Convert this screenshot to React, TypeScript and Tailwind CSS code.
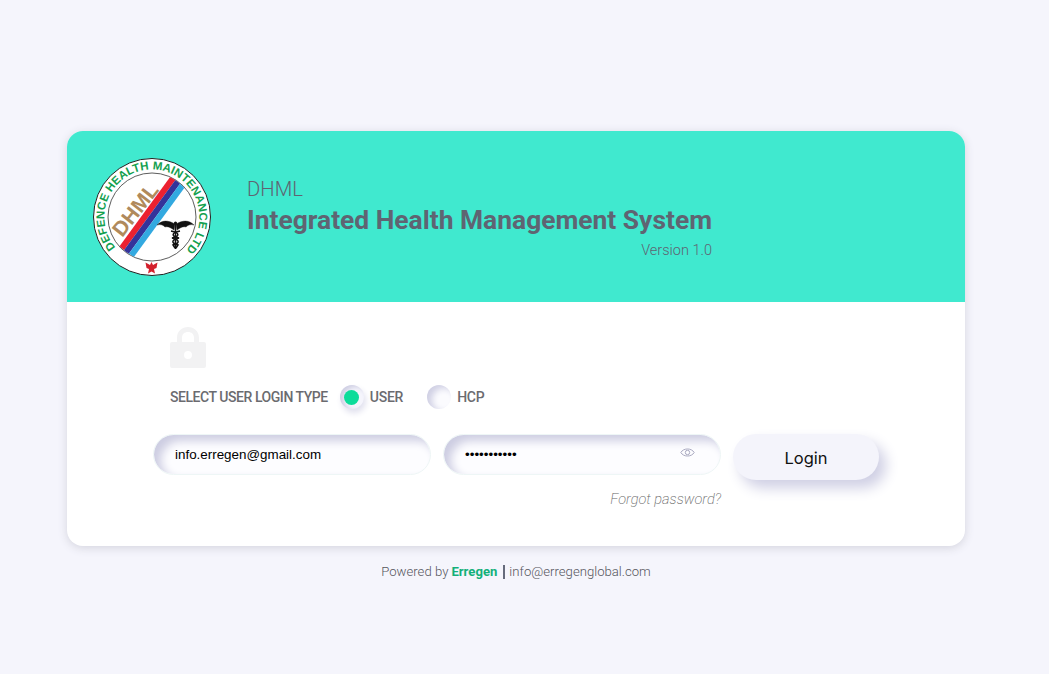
const roboto = { fontFamily: "Roboto, sans-serif" };

const Logo = () => (
  <svg width="120" height="120" viewBox="0 0 120 120" className="shrink-0">
    <defs>
      <path id="ring-text" d="M 23.5 90.5 A 47.5 47.5 0 1 1 93 94" fill="none" />
      <clipPath id="inner-circle">
        <circle cx="60" cy="60" r="43.5" />
      </clipPath>
    </defs>
    <circle cx="60" cy="60" r="58.5" fill="#fff" stroke="#222" strokeWidth="1" />
    <circle cx="60" cy="60" r="44" fill="#fff" stroke="#333" strokeWidth="0.8" />
    <text fill="#13a04f" fontSize="11.5" fontWeight="700" fontFamily="Liberation Sans, sans-serif">
      <textPath href="#ring-text" textLength="222" lengthAdjust="spacing">
        DEFENCE HEALTH MAINTENANCE LTD.
      </textPath>
    </text>
    <g clipPath="url(#inner-circle)">
      <line x1="25.2" y1="97.4" x2="85.2" y2="15.4" stroke="#ec2130" strokeWidth="6" />
      <line x1="30" y1="101" x2="90" y2="19" stroke="#34339a" strokeWidth="6" />
      <line x1="34.8" y1="104.6" x2="94.8" y2="22.6" stroke="#33a9e0" strokeWidth="6" />
    </g>
    <text
      x="45"
      y="59"
      fill="#b08a5c"
      fontSize="21"
      fontWeight="700"
      textAnchor="middle"
      transform="rotate(-52 45 54)"
      fontFamily="Liberation Sans, sans-serif"
    >
      DHML
    </text>
    {/* caduceus */}
    <g fill="#111" stroke="#111">
      <path d="M 83 67 C 76 63 70 63 65 68 C 69 67 71 68 73 70 C 76 69 79 71 82 73 Z" strokeWidth="0.4" />
      <path d="M 84 67 C 91 63 97 63 102 68 C 98 67 96 68 94 70 C 91 69 88 71 85 73 Z" strokeWidth="0.4" />
      <circle cx="83.5" cy="66" r="1.6" strokeWidth="0" />
      <line x1="83.5" y1="66" x2="83.5" y2="92" strokeWidth="1.6" />
      <path d="M 79 74 C 88 76 88 79 80 81 C 88 83 88 86 81 88 L 83 91" fill="none" strokeWidth="1.5" />
      <path d="M 88 74 C 79 76 79 79 87 81 C 79 83 79 86 86 88 L 84 91" fill="none" strokeWidth="1.5" />
    </g>
    {/* eagle */}
    <path
      d="M 59.5 105 L 61 108 L 65.5 105.5 L 64.5 111 L 62 112 L 63 116.5 L 59.5 114.5 L 56 116.5 L 57 112 L 54.5 111 L 53.5 105.5 L 58 108 Z"
      fill="#d3202c"
    />
  </svg>
);

const LockIcon = () => (
  <svg width="38" height="42" viewBox="0 0 38 42" fill="#f2f2f3">
    <path d="M 8 17 V 12 C 8 5 13 1 19 1 C 25 1 30 5 30 12 V 17 H 25 V 12 C 25 8 22.5 6 19 6 C 15.5 6 13 8 13 12 V 17 Z" />
    <path
      fillRule="evenodd"
      d="M 3 16 H 35 A 2 2 0 0 1 37 18 V 40 A 2 2 0 0 1 35 42 H 3 A 2 2 0 0 1 1 40 V 18 A 2 2 0 0 1 3 16 Z M 19 25 A 4 4 0 1 0 19 33 A 4 4 0 1 0 19 25 Z"
    />
  </svg>
);

const EyeIcon = () => (
  <svg width="15" height="11" viewBox="0 0 15 11" fill="none" stroke="#a9a9c0" strokeWidth="1">
    <path d="M 0.8 5.5 C 3.5 0.8 11.5 0.8 14.2 5.5 C 11.5 10.2 3.5 10.2 0.8 5.5 Z" />
    <circle cx="7.5" cy="5.5" r="2.2" />
  </svg>
);

const Radio = ({ checked, label }: { checked?: boolean; label: string }) => (
  <div className="flex items-center gap-[6px]">
    <div
      className={
        checked
          ? "flex h-[24px] w-[24px] items-center justify-center rounded-full bg-[#f5f5fc] shadow-[inset_4px_2px_5px_#cfcfe3,2px_4px_6px_#e0e0ee]"
          : "flex h-[24px] w-[24px] items-center justify-center rounded-full bg-[#fbfbfe] shadow-[inset_5px_3px_6px_#d0d0e4]"
      }
    >
      {checked && <div className="h-[15px] w-[15px] rounded-full bg-[#0cdc9a]" />}
    </div>
    <span className="text-[14px] font-medium tracking-[-0.25px] text-[#6b6b6f]">{label}</span>
  </div>
);

const inputClass =
  "h-[41px] w-[278px] rounded-full border border-[#eef6f6] bg-[#fdfdff] pl-[21px] pr-[44px] text-[13.4px] text-black outline-none shadow-[inset_7px_6px_10px_#cdcde2]";

export default function App() {
  return (
    <div className="min-h-[674px] w-full bg-[#f5f5fc] pl-[67px] pt-[131px]" style={roboto}>
      <div className="w-[898px] overflow-hidden rounded-[16px] bg-white shadow-[0_2px_10px_#d4d4de]">
        <div className="flex h-[171px] items-center bg-[#40e9cf] pt-[1px] pl-[25px]">
          <Logo />
          <div className="ml-[35px] mt-[2px] flex w-[465px] flex-col text-[#5f6472]">
            <div className="text-[20.3px] font-light leading-[24px]">DHML</div>
            <div className="mt-[3px] whitespace-nowrap text-[26.4px] font-bold leading-[32px]">
              Integrated Health Management System
            </div>
            <div className="mt-[6px] text-right text-[14.5px] font-light leading-[18px]">Version 1.0</div>
          </div>
        </div>

        <div className="flex h-[244px] flex-col pl-[86px]">
          <div className="ml-[16px] mt-[24px]">
            <LockIcon />
          </div>
          <div className="ml-[17px] mt-[17px] flex h-[24px] items-center">
            <span className="text-[14px] font-medium tracking-[-0.45px] text-[#6b6b6f]">SELECT USER LOGIN TYPE</span>
            <div className="ml-[12px] flex items-center gap-[24px]">
              <Radio checked label="USER" />
              <Radio label="HCP" />
            </div>
          </div>
          <div className="mt-[25px] flex items-start gap-[12px]">
            <input className={inputClass} style={{ fontFamily: "Liberation Sans, sans-serif" }} defaultValue="info.erregen@gmail.com" readOnly />
            <div className="relative">
              <input
                type="password"
                className={inputClass}
                style={{ fontFamily: "Liberation Sans, sans-serif" }}
                defaultValue="erregen1234"
                readOnly
              />
              <div className="absolute right-[26px] top-[13px] flex">
                <EyeIcon />
              </div>
            </div>
            <button
              className="h-[46px] w-[146px] rounded-full bg-[#f4f4fb] pt-[2px] text-[16.5px] text-[#111] shadow-[7px_8px_14px_#cfcfe4]"
              style={{ fontFamily: "Inter, sans-serif" }}
            >
              Login
            </button>
          </div>
          <div className="mt-[10px] w-[568px] text-right text-[14.6px] font-extralight italic leading-[18px] text-[#666]">
            Forgot password?
          </div>
        </div>
      </div>

      <div className="mt-[17px] flex w-[898px] items-center justify-center text-[13.15px] font-light leading-[18px] text-[#55565c]">
        <span>Powered by</span>
        <span className="ml-[3px] font-bold text-[#13b07a]">Erregen</span>
        <span className="ml-[6px] h-[14px] w-[2px] bg-[#666b7c]" />
        <span className="ml-[4px]">info@erregenglobal.com</span>
      </div>
    </div>
  );
}
